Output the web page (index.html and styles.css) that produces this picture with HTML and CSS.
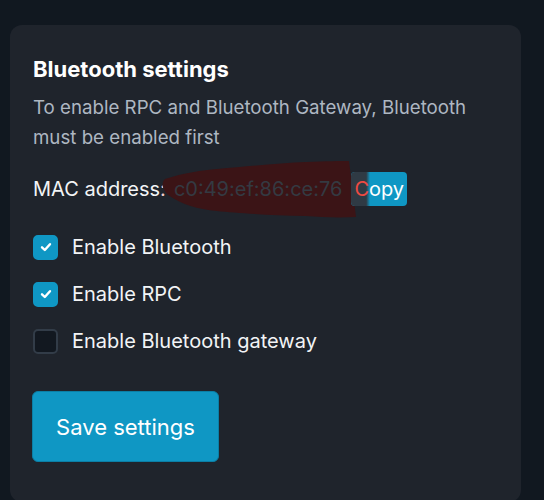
FILE: index.html
```html
<!DOCTYPE html>
<html lang="en">
<head>
    <meta charset="UTF-8">
    <meta name="viewport" content="width=device-width, initial-scale=1.0">
    <title>Bluetooth settings</title>
    <link rel="stylesheet" href="styles.css">
</head>
<body>
    <div class="card">
        <h2 class="title">Bluetooth settings</h2>
        <p class="desc">To enable RPC and Bluetooth Gateway, Bluetooth must be enabled first</p>

        <div class="mac-row">
            <span class="mac-label">MAC address<span class="colon">:</span></span>
            <span class="mac-value">c0:49:ef:86:ce:76</span>
            <button class="copy-btn"><span class="red">C</span>opy</button>
            <!-- redaction scribble drawn over the address -->
            <svg class="smear" width="206" height="62" viewBox="0 0 206 62">
                <path d="M4 20 C22 14 42 11 56 10 C90 7 120 4 145 3 C165 2 180 2 188 2 L195 58 C175 59 160 58 145 57 C105 56 75 54 56 52 C36 50 22 46 7 36 C1 30 0 24 4 20 Z" fill="#3b1416"/>
            </svg>
        </div>

        <label class="check-row">
            <span class="box checked">
                <svg width="14" height="14" viewBox="0 0 14 14"><path d="M3 7.3 L5.8 10 L11 4.2" fill="none" stroke="#fff" stroke-width="2.4" stroke-linecap="round" stroke-linejoin="round"/></svg>
            </span>
            Enable Bluetooth
        </label>
        <label class="check-row">
            <span class="box checked">
                <svg width="14" height="14" viewBox="0 0 14 14"><path d="M3 7.3 L5.8 10 L11 4.2" fill="none" stroke="#fff" stroke-width="2.4" stroke-linecap="round" stroke-linejoin="round"/></svg>
            </span>
            Enable RPC
        </label>
        <label class="check-row">
            <span class="box"></span>
            Enable Bluetooth gateway
        </label>

        <button class="save-btn">Save settings</button>
    </div>
</body>
</html>
```

FILE: styles.css
```css
body {
    font-family: 'Inter', 'Noto Sans', sans-serif;
    margin: 0;
    padding: 25px 0 0 10px;
    background: #111820;
    color: white;
    height: 500px;
    box-sizing: border-box;
    overflow: hidden;
}
.card {
    width: 511px;
    box-sizing: border-box;
    background: #1f242c;
    border-radius: 12px;
    padding: 31px 23px 40px;
}
.title {
    font-size: 22px;
    font-weight: 700;
    margin: 0;
    line-height: 26px;
}
.desc {
    font-size: 18.7px;
    line-height: 30px;
    color: #aeb7c2;
    margin: 11px 0 0;
}
.mac-row {
    position: relative;
    display: flex;
    align-items: center;
    margin-top: 19px;
    height: 34px;
    font-size: 20px;
}
.mac-label {
    color: #f2f4f6;
}
.colon {
    color: #f3cfcf;
}
.mac-value {
    color: #343a42;
    margin-left: 8px;
    position: relative;
    z-index: 2;
}
.copy-btn {
    margin-left: 9px;
    background: #0f97c4;
    color: white;
    border: none;
    border-radius: 4px;
    font-family: inherit;
    font-size: 20px;
    padding: 0 3px;
    height: 34px;
    position: relative;
    z-index: 2;
    overflow: hidden;
}
.copy-btn::before {
    content: "";
    position: absolute;
    left: 0;
    top: 0;
    bottom: 0;
    width: 19px;
    background: linear-gradient(to right, #2f3a44 80%, rgba(47, 58, 68, 0));
}
.red {
    color: #ee4a42;
    position: relative;
}
.smear {
    position: absolute;
    left: 128px;
    top: -13px;
    z-index: 1;
}
.check-row {
    display: flex;
    align-items: center;
    gap: 14px;
    font-size: 20px;
    color: #f2f4f6;
    height: 26px;
    margin-top: 21px;
}
.check-row:first-of-type {
    margin-top: 28px;
}
.box {
    width: 25px;
    height: 25px;
    box-sizing: border-box;
    border-radius: 5px;
    border: 2px solid #323c48;
    background: #121820;
    display: flex;
    align-items: center;
    justify-content: center;
}
.box.checked {
    background: #0f97c4;
    border-color: #0f97c4;
}
.save-btn {
    display: block;
    margin-top: 37px;
    margin-left: -1px;
    width: 187px;
    height: 71px;
    background: #0f97c4;
    color: white;
    border: 1px solid #0b7fa6;
    border-radius: 6px;
    font-family: inherit;
    font-size: 22px;
}
```
